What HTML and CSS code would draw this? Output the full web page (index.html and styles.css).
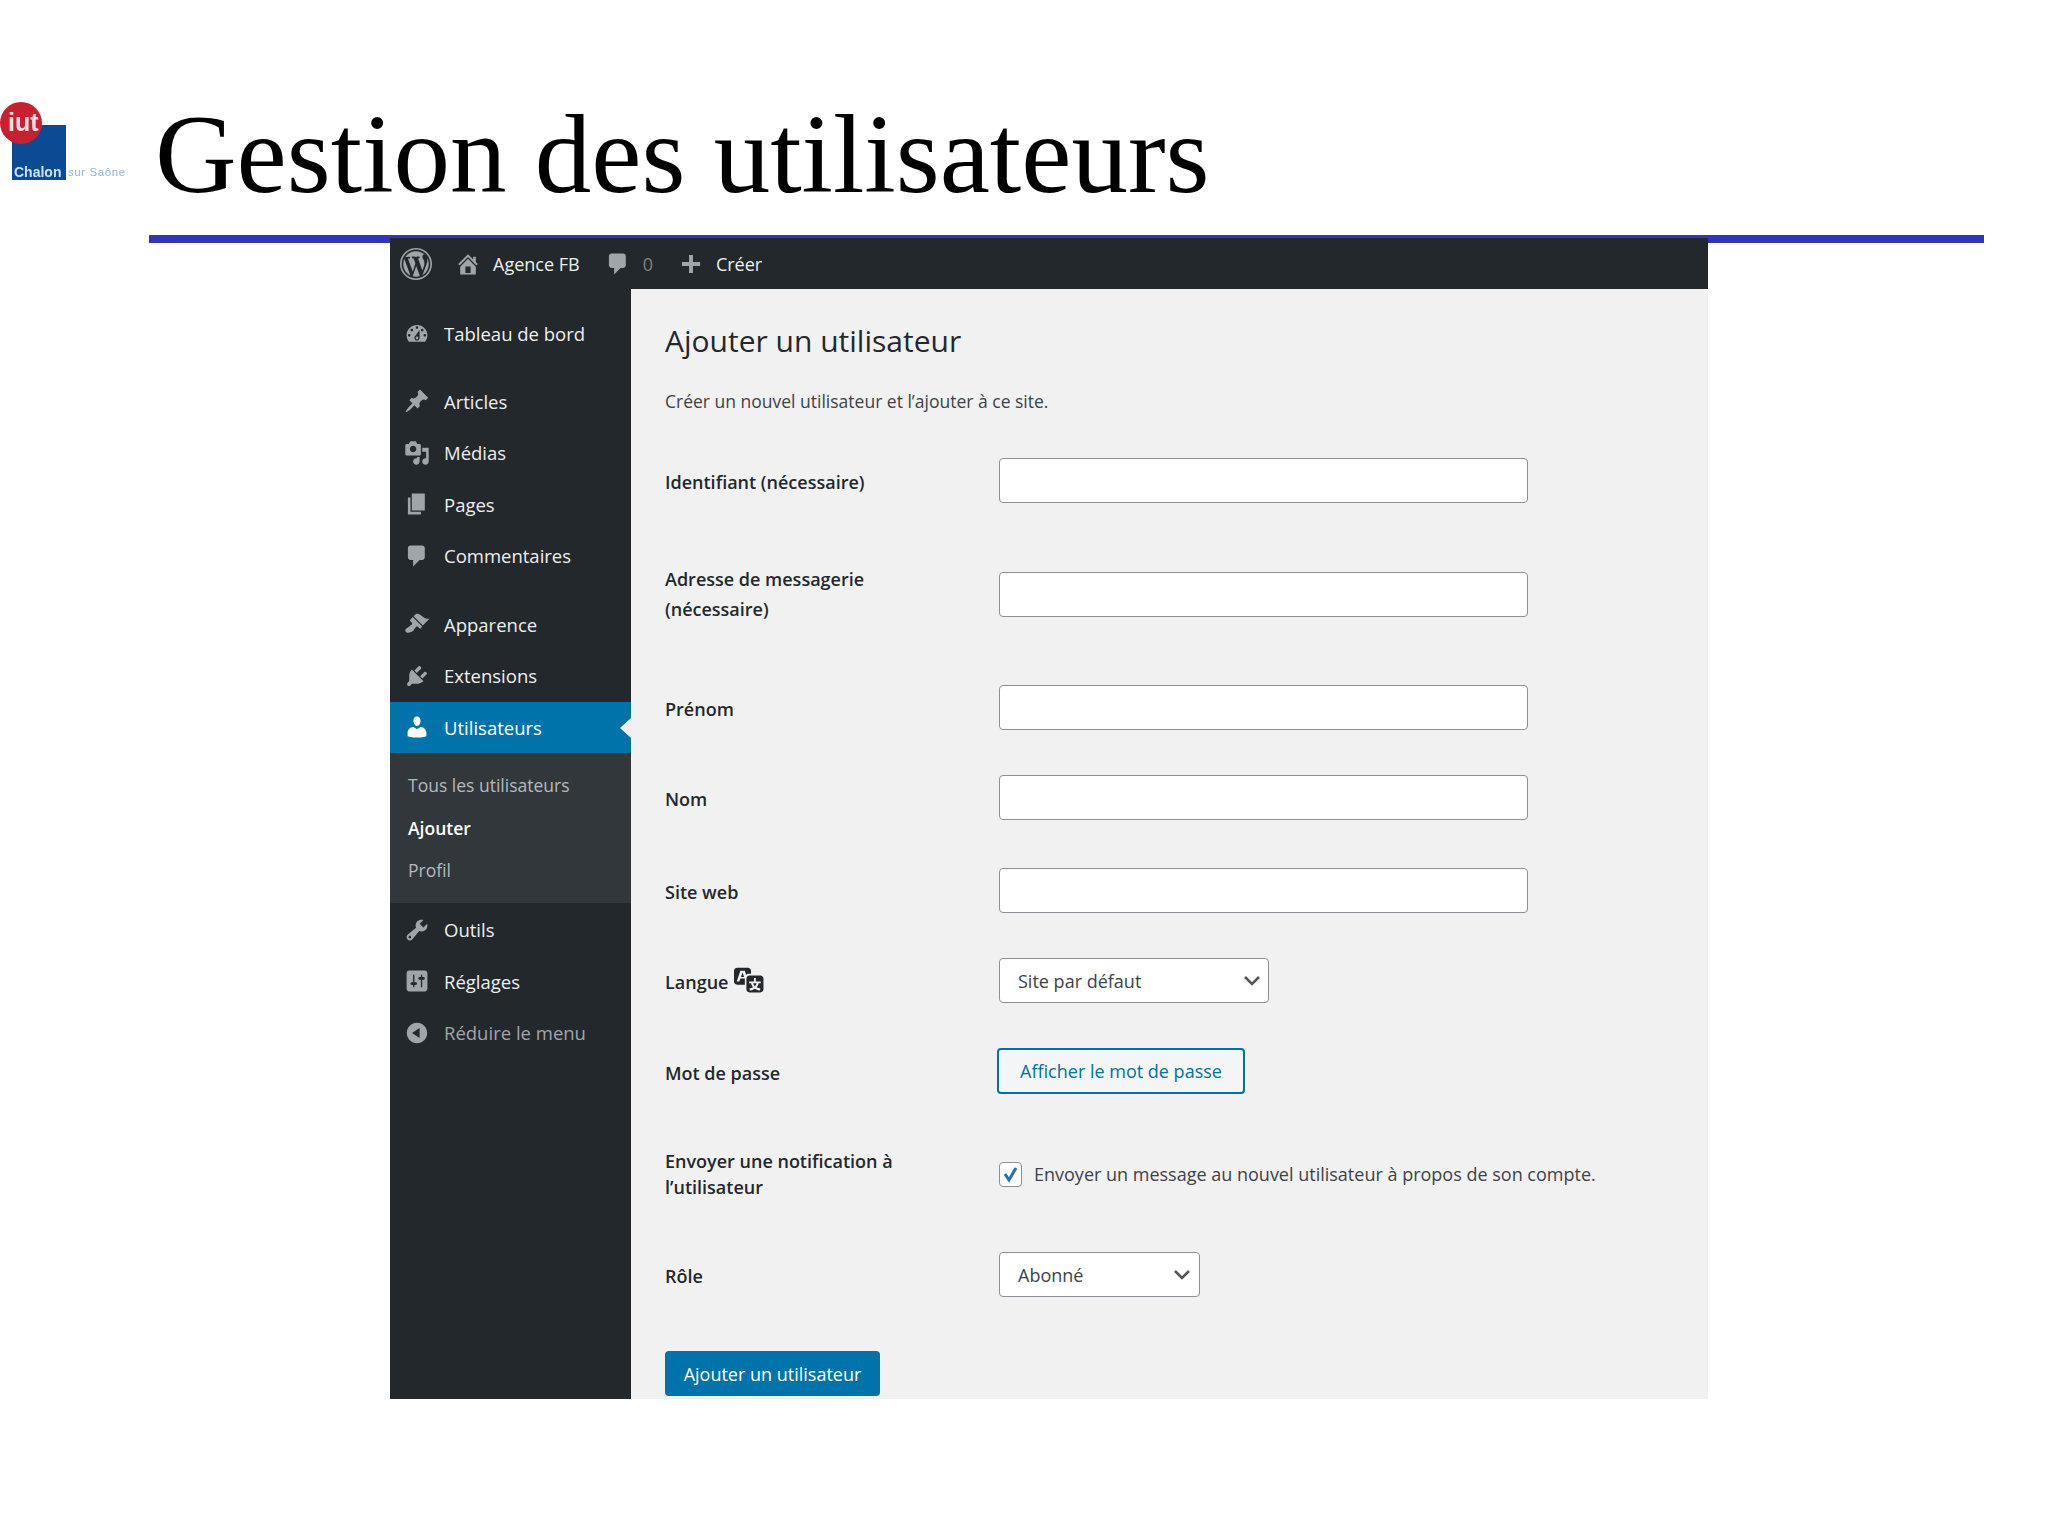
FILE: index.html
```html
<!DOCTYPE html>
<html lang="fr">
<head>
    <meta charset="UTF-8">
    <title>Gestion des utilisateurs</title>
    <link rel="stylesheet" href="styles.css">
</head>
<body>
    <svg class="defs" width="0" height="0">
        <symbol id="i-wp" viewBox="0 0 20 20"><path d="M20 10c0-5.52-4.48-10-10-10S0 4.48 0 10s4.48 10 10 10 10-4.48 10-10zM10 1.01c4.97 0 8.99 4.02 8.99 8.99s-4.02 8.99-8.99 8.99S1.01 14.97 1.01 10 5.03 1.01 10 1.01zM8.01 14.82L4.96 6.61c.49-.03 1.05-.08 1.05-.08.43-.05.38-1.01-.06-.99 0 0-1.29.1-2.13.1-.15 0-.33 0-.52-.01 1.44-2.17 3.9-3.6 6.7-3.6 2.09 0 3.99.79 5.41 2.09-.6-.08-1.45.35-1.45 1.42 0 .66.38 1.22.79 1.88.31.54.5 1.22.5 2.21 0 1.34-1.27 4.48-1.27 4.48l-2.71-7.5c.48-.03.75-.16.75-.16.43-.05.38-1.1-.05-1.08 0 0-1.3.11-2.14.11-.78 0-2.11-.11-2.11-.11-.43-.02-.48 1.06-.05 1.08l.84.08 1.12 3.04zm6.02 2.15L16.64 10s.67-1.69.39-3.81c.63 1.14.94 2.42.94 3.81 0 2.96-1.56 5.58-3.94 6.97zM2.68 6.77L6.5 17.25c-2.67-1.3-4.47-4.08-4.47-7.25 0-1.16.2-2.23.65-3.23zm7.45 4.53l2.29 6.25c-.75.27-1.57.42-2.42.42-.72 0-1.41-.11-2.06-.3z"/></symbol>
        <symbol id="i-home" viewBox="0 0 20 20"><path d="M16 8.5l1.53 1.53-1.06 1.06L10 4.62l-6.47 6.47-1.06-1.06L10 2.5l4 4v-2h2v4zm-6-2.46l6 5.99V18H4v-5.97zM12 17v-5H8v5h4z"/></symbol>
        <symbol id="i-comment" viewBox="0 0 20 20"><path d="M5 2h9c1.1 0 2 .9 2 2v7c0 1.1-.9 2-2 2h-2l-5 5v-5H5c-1.1 0-2-.9-2-2V4c0-1.1.9-2 2-2z"/></symbol>
        <symbol id="i-plus" viewBox="0 0 20 20"><path d="M17 8.5v3h-5.5V17h-3v-5.500H3v-3h5.500V3h3v5.500H17z"/></symbol>
        <symbol id="i-dashboard" viewBox="0 0 20 20"><path d="M3.760 16h12.480c1.100-1.370 1.760-3.110 1.760-5 0-4.420-3.580-8-8-8s-8 3.580-8 8c0 1.890.660 3.630 1.760 5zM10 4c.550 0 1 .450 1 1s-.450 1-1 1-1-.450-1-1 .450-1 1-1zM6 6c.550 0 1 .450 1 1s-.450 1-1 1-1-.450-1-1 .450-1 1-1zm8 0c.550 0 1 .450 1 1s-.450 1-1 1-1-.450-1-1 .450-1 1-1zm-5.370 5.550L12 7v6c0 1.100-.900 2-2 2s-2-.900-2-2c0-.570.240-1.080.630-1.450zM4 10c.550 0 1 .450 1 1s-.450 1-1 1-1-.450-1-1 .450-1 1-1zm12 0c.550 0 1 .450 1 1s-.450 1-1 1-1-.450-1-1 .450-1 1-1zm-5 3c0-.550-.450-1-1-1s-1 .450-1 1 .450 1 1 1 1-.450 1-1z"/></symbol>
        <symbol id="i-pin" viewBox="0 0 20 20"><path d="M10.440 3.020l1.820-1.820 6.360 6.350-1.830 1.820c-1.050-.680-2.480-.570-3.410.360l-.750.750c-.920.930-1.040 2.350-.350 3.410l-1.830 1.820-2.410-2.410-2.800 2.790c-.420.420-3.380 2.710-3.800 2.290s1.860-3.390 2.280-3.810l2.790-2.790L4.100 9.360l1.830-1.820c1.050.690 2.480.570 3.400-.360l.750-.750c.930-.920 1.050-2.350.360-3.410z"/></symbol>
        <symbol id="i-media" viewBox="0 0 20 20"><path d="M13 11V4c0-.550-.450-1-1-1h-1.670L9 1H5L3.670 3H2c-.550 0-1 .450-1 1v7c0 .550.450 1 1 1h10c.550 0 1-.450 1-1zM7 4.500c1.380 0 2.500 1.120 2.500 2.500S8.380 9.500 7 9.500 4.500 8.380 4.500 7 5.620 4.500 7 4.500zM14 6h5v10.500c0 1.380-1.120 2.500-2.500 2.500S14 17.880 14 16.500s1.120-2.500 2.500-2.500c.170 0 .340.020.500.050V9h-3V6zm-4 8.050V13h2v3.500c0 1.380-1.120 2.500-2.500 2.500S7 17.880 7 16.500 8.120 14 9.500 14c.170 0 .340.020.500.050z"/></symbol>
        <symbol id="i-page" viewBox="0 0 20 20"><path d="M6 15V2h10v13H6zm-1 1h8v2H3V5h2v11z"/></symbol>
        <symbol id="i-brush" viewBox="0 0 20 20"><path d="M14.480 11.060L7.410 3.990l1.500-1.500c.500-.560 2.300-.470 3.510.320 1.210.800 1.430 1.280 2.910 2.100 1.180.640 2.450 1.260 4.450.850zm-.710.710L6.700 4.700 4.930 6.470c-.390.390-.390 1.020 0 1.410l1.060 1.060c.390.390.390 1.030 0 1.420-.600.600-1.430 1.110-2.210 1.690-.350.260-.700.530-1.010.840C1.430 13.230.400 14.960 1.500 16.060c.900.910 2.530.760 3.850.180.490-.220 1.020-.500 1.490-.900.310-.260.580-.590.840-.930.580-.780 1.090-1.610 1.690-2.210.390-.390 1.030-.390 1.420 0l1.060 1.060c.390.390 1.020.390 1.410 0z"/></symbol>
        <symbol id="i-plug" viewBox="0 0 20 20"><path d="M13.110 4.360L9.870 7.600 8 5.730l3.240-3.240c.350-.340 1.050-.200 1.560.320.520.510.660 1.210.310 1.550zm-8 1.770l.910-1.120 9.010 9.010-1.190.840c-.710.710-2.630 1.160-3.820 1.160H6.140L4.900 17.260c-.590.590-1.540.590-2.120 0-.590-.580-.590-1.530 0-2.120l1.240-1.240v-3.880c0-1.130.400-3.190 1.090-3.890zm7.260 3.970l3.240-3.240c.340-.350 1.040-.210 1.550.310.520.510.660 1.210.310 1.550l-3.240 3.250z"/></symbol>
        <symbol id="i-users" viewBox="0 0 20 20"><path d="M10 9.250c-2.270 0-2.730-3.440-2.730-3.440C7 4.020 7.820 2 9.970 2c2.160 0 2.980 2.020 2.710 3.810 0 0-.410 3.440-2.680 3.440zm0 2.570L12.720 10c2.390 0 4.520 2.330 4.520 4.530v2.490s-3.650 1.130-7.240 1.130c-3.650 0-7.240-1.130-7.240-1.130v-2.490c0-2.250 1.940-4.480 4.470-4.480z"/></symbol>
        <symbol id="i-tools" viewBox="0 0 20 20"><path d="M16.680 9.770c-1.340 1.340-3.300 1.670-4.950.990l-5.410 6.520c-.990.990-2.590.990-3.580 0s-.990-2.590 0-3.570l6.520-5.420c-.680-1.650-.350-3.610.990-4.950 1.280-1.280 3.120-1.620 4.720-1.060l-2.890 2.890 2.820 2.820 2.860-2.870c.530 1.580.180 3.390-1.080 4.650zM3.810 16.210c.400.390 1.040.390 1.430 0 .400-.400.400-1.040 0-1.430-.390-.400-1.030-.400-1.430 0-.390.390-.390 1.030 0 1.430z"/></symbol>
        <symbol id="i-settings" viewBox="0 0 20 20"><path d="M18 16V4c0-1.100-.900-2-2-2H4c-1.100 0-2 .900-2 2v12c0 1.100.900 2 2 2h12c1.100 0 2-.900 2-2zM8 11h1c.550 0 1 .450 1 1s-.450 1-1 1H8v1.500c0 .280-.220.500-.500.500s-.500-.220-.500-.500V13H6c-.550 0-1-.450-1-1s.450-1 1-1h1V5.500c0-.280.220-.500.500-.500s.500.220.500.500V11zm5-2h-1c-.550 0-1-.450-1-1s.450-1 1-1h1V5.500c0-.280.220-.500.500-.500s.500.220.500.500V7h1c.550 0 1 .450 1 1s-.450 1-1 1h-1v5.500c0 .280-.220.500-.500.500s-.500-.220-.500-.500V9z"/></symbol>
        <symbol id="i-collapse" viewBox="0 0 20 20"><path d="M10 2.160c4.330 0 7.840 3.510 7.840 7.840s-3.510 7.840-7.840 7.840S2.160 14.330 2.160 10 5.710 2.160 10 2.160zm2 11.720V6.120L6.180 9.970z"/></symbol>
        <symbol id="i-translate" viewBox="0 0 20 20"><path d="M11 7H9.490c-.630 0-1.250.300-1.590.700L7 5H4.130l-2.390 7h1.690l.740-2H7v4H2c-1.100 0-2-.900-2-2V5c0-1.100.900-2 2-2h7c1.100 0 2 .900 2 2v2zM6.510 9H4.490l1-2.930zM10 8h7c1.100 0 2 .900 2 2v7c0 1.100-.900 2-2 2h-7c-1.100 0-2-.900-2-2v-7c0-1.100.900-2 2-2zm7.250 5v-1.080h-3.170V9.750h-1.160v2.170H9.750V13h1.280c.110.850.560 1.850 1.280 2.620-.870.360-1.890.620-2.310.620-.010.020.220.970.200 1.460.840 0 2.210-.500 3.280-1.150 1.090.650 2.480 1.150 3.340 1.150-.020-.490.200-1.440.200-1.460-.430 0-1.490-.270-2.380-.630.700-.770 1.140-1.770 1.250-2.610h1.360zm-3.810 1.930c-.500-.460-.850-1.130-1.010-1.930h2.090c-.170.800-.510 1.470-1 1.930l-.040.030s-.030-.020-.040-.030z"/></symbol>
    </svg>

    <header class="slide-head">
        <svg class="logo" viewBox="0 0 137 105" width="137" height="105">
            <rect x="12" y="45" width="54" height="55" fill="#0d4a94"/>
            <text x="14" y="97" class="logo-city">Chalon</text>
            <text x="68" y="96" class="logo-sub">sur Saône</text>
            <circle cx="21" cy="43" r="21" fill="#c9202f"/>
            <text x="8" y="51" class="logo-iut">iut</text>
        </svg>
        <h1 class="slide-title">Gestion des utilisateurs</h1>
    </header>
    <div class="slide-rule"></div>

    <div class="wp">
        <div class="adminbar">
            <svg class="bar-logo"><use href="#i-wp"/></svg>
            <span class="bar-item bar-site"><svg class="bar-icon"><use href="#i-home"/></svg>Agence FB</span>
            <span class="bar-item bar-comments"><svg class="bar-icon"><use href="#i-comment"/></svg><span class="bar-count">0</span></span>
            <span class="bar-item bar-new"><svg class="bar-icon"><use href="#i-plus"/></svg>Créer</span>
        </div>
        <div class="wp-body">
            <nav class="sidebar">
                <ul class="menu menu-first">
                    <li><svg class="menu-icon"><use href="#i-dashboard"/></svg>Tableau de bord</li>
                </ul>
                <ul class="menu">
                    <li><svg class="menu-icon"><use href="#i-pin"/></svg>Articles</li>
                    <li><svg class="menu-icon"><use href="#i-media"/></svg>Médias</li>
                    <li><svg class="menu-icon"><use href="#i-page"/></svg>Pages</li>
                    <li><svg class="menu-icon"><use href="#i-comment"/></svg>Commentaires</li>
                </ul>
                <ul class="menu">
                    <li><svg class="menu-icon"><use href="#i-brush"/></svg>Apparence</li>
                    <li><svg class="menu-icon"><use href="#i-plug"/></svg>Extensions</li>
                    <li class="active"><svg class="menu-icon"><use href="#i-users"/></svg>Utilisateurs</li>
                </ul>
                <ul class="submenu">
                    <li>Tous les utilisateurs</li>
                    <li class="current">Ajouter</li>
                    <li>Profil</li>
                </ul>
                <ul class="menu menu-last">
                    <li><svg class="menu-icon"><use href="#i-tools"/></svg>Outils</li>
                    <li><svg class="menu-icon"><use href="#i-settings"/></svg>Réglages</li>
                    <li class="collapse"><svg class="menu-icon"><use href="#i-collapse"/></svg>Réduire le menu</li>
                </ul>
            </nav>
            <main class="content">
                <h2 class="page-title">Ajouter un utilisateur</h2>
                <p class="intro">Créer un nouvel utilisateur et l’ajouter à ce site.</p>
                <form class="user-form">
                    <div class="form-row row-wide">
                        <label for="login">Identifiant (nécessaire)</label>
                        <input type="text" id="login">
                    </div>
                    <div class="form-row row-wide">
                        <label for="email" class="label-loose">Adresse de messagerie (nécessaire)</label>
                        <input type="text" id="email">
                    </div>
                    <div class="form-row">
                        <label for="first">Prénom</label>
                        <input type="text" id="first">
                    </div>
                    <div class="form-row row-mid">
                        <label for="last">Nom</label>
                        <input type="text" id="last">
                    </div>
                    <div class="form-row">
                        <label for="url">Site web</label>
                        <input type="text" id="url">
                    </div>
                    <div class="form-row">
                        <label for="locale">Langue <svg class="lang-icon"><use href="#i-translate"/></svg></label>
                        <select id="locale" class="select-lang"><option>Site par défaut</option></select>
                    </div>
                    <div class="form-row row-pass">
                        <label>Mot de passe</label>
                        <button type="button" class="btn-outline">Afficher le mot de passe</button>
                    </div>
                    <div class="form-row row-notify">
                        <label for="notify" class="label-tight">Envoyer une notification à l’utilisateur</label>
                        <div class="check-line">
                            <input type="checkbox" id="notify" checked>
                            <span>Envoyer un message au nouvel utilisateur à propos de son compte.</span>
                        </div>
                    </div>
                    <div class="form-row row-role">
                        <label for="role">Rôle</label>
                        <select id="role" class="select-role"><option>Abonné</option></select>
                    </div>
                    <button type="button" class="btn-primary">Ajouter un utilisateur</button>
                </form>
            </main>
        </div>
    </div>
</body>
</html>
```
FILE: styles.css
```css
* {
    box-sizing: border-box;
}
body {
    margin: 0;
    background: #fff;
    font-family: "Open Sans", "Noto Sans", sans-serif;
}
ul {
    list-style: none;
    margin: 0;
    padding: 0;
}
.defs {
    display: block;
    height: 0;
}

/* slide header */
.slide-head {
    display: flex;
    height: 235px;
}
.logo {
    flex: none;
    margin-top: 80px;
    filter: blur(0.7px);
}
.logo-city {
    font: bold 14px "Liberation Sans", sans-serif;
    fill: #cfe0f2;
}
.logo-sub {
    font: 11.500px "Liberation Sans", sans-serif;
    letter-spacing: 0.600px;
    fill: #8eb4dc;
}
.logo-iut {
    font: bold 25px "Liberation Sans", sans-serif;
    fill: #f6dfe0;
}
.slide-title {
    margin: 97px 0 0 18px;
    font: 400 113px/1 "Liberation Serif", serif;
    color: #000;
}
.slide-rule {
    width: 1835px;
    height: 8px;
    margin-left: 149px;
    background: #3333bb;
}

/* wp window */
.wp {
    width: 1318px;
    height: 1161px;
    margin: -5px 0 0 390px;
    display: flex;
    flex-direction: column;
    background: #23282d;
    position: relative;
}
.adminbar {
    height: 51px;
    display: flex;
    align-items: center;
    color: #eee;
    font-size: 18px;
}
.adminbar svg {
    fill: #a0a5aa;
}
.bar-logo {
    width: 32px;
    height: 32px;
    margin-left: 10px;
}
.bar-item {
    display: flex;
    align-items: center;
}
.bar-icon {
    width: 26px;
    height: 26px;
    margin-right: 12px;
}
.bar-site {
    margin-left: 23px;
}
.bar-comments {
    margin-left: 25px;
}
.bar-count {
    color: #7d8287;
}
.bar-new {
    margin-left: 25px;
}
.wp-body {
    flex: 1;
    display: flex;
    min-height: 0;
}

/* sidebar */
.sidebar {
    width: 241px;
    flex: none;
    padding-top: 19px;
    color: #eee;
    font-size: 18.500px;
}
.menu {
    margin-bottom: 17px;
}
.menu li {
    position: relative;
    height: 51.500px;
    padding-left: 14px;
    display: flex;
    align-items: center;
}
.menu-icon {
    flex: none;
    width: 26px;
    height: 26px;
    margin-right: 14px;
    fill: #a0a5aa;
}
.menu-first {
    margin-bottom: 16px;
}
.menu:nth-child(3) {
    margin-bottom: 0;
}
.menu li.active {
    background: #0073aa;
    color: #fff;
}
.active .menu-icon {
    fill: #fff;
}
.active::after {
    content: "";
    position: absolute;
    right: 0;
    top: 16px;
    border: 10px solid transparent;
    border-left: 0;
    border-right: 11px solid #f1f1f1;
}
.submenu {
    height: 150px;
    padding: 11px 0 0 18px;
    background: #32373c;
    color: #b4b9be;
    font-size: 17.500px;
}
.submenu li {
    height: 42.500px;
    line-height: 42px;
}
.submenu .current {
    color: #fff;
    font-weight: 600;
}
.menu-last {
    margin-bottom: 0;
    padding-top: 1px;
}
.menu .collapse {
    color: #a0a5aa;
}

/* content */
.content {
    flex: 1;
    padding: 0 0 0 34px;
    background: #f1f1f1;
    color: #23282d;
    overflow: hidden;
}
.page-title {
    margin: 31px 0 0;
    font-size: 30px;
    font-weight: 400;
    line-height: 42px;
}
.intro {
    margin: 27px 0 0;
    font-size: 17.500px;
    line-height: 24px;
    color: #3c434a;
}
.user-form {
    margin-top: 45px;
}
.form-row {
    display: grid;
    grid-template-columns: 334px 1fr;
    align-items: center;
    padding-bottom: 45px;
    font-size: 18px;
}
.row-wide {
    padding-bottom: 61px;
}
.row-mid {
    padding-bottom: 48px;
}
.row-pass {
    padding-bottom: 54px;
}
.row-notify {
    padding-bottom: 52px;
}
.row-role {
    padding-bottom: 54px;
}
.form-row label {
    display: block;
    font-weight: 600;
    line-height: 30px;
    padding-top: 3px;
    padding-right: 60px;
}
.form-row .label-tight {
    line-height: 26px;
    padding-top: 0;
}
.form-row .label-loose {
    padding-top: 0;
}
.lang-icon {
    width: 31px;
    height: 31px;
    vertical-align: -5px;
    margin-left: 1px;
    margin-top: -8px;
    fill: #23282d;
}
input[type="text"], select {
    display: block;
    height: 45px;
    border: 1px solid #8c8f94;
    border-radius: 4px;
    background: #fff;
}
input[type="text"] {
    width: 529px;
}
select {
    appearance: none;
    padding: 0 0 0 18px;
    font: 18px "Open Sans", sans-serif;
    color: #3c434a;
    background: #fff url("data:image/svg+xml,%3Csvg xmlns='http://www.w3.org/2000/svg' width='20' height='20'%3E%3Cpath d='M3 6l7 7 7-7' fill='none' stroke='%23555' stroke-width='2.500'/%3E%3C/svg%3E") no-repeat;
}
.select-lang {
    width: 270px;
    background-position: 242px 12px;
}
.select-role {
    width: 201px;
    background-position: 172px 12px;
}
.btn-outline {
    justify-self: start;
    height: 46px;
    width: 248px;
    margin-left: -2px;
    padding: 0;
    border: 2px solid #0071a1;
    border-radius: 4px;
    background: #f3f5f6;
    color: #0071a1;
    font: 18px "Open Sans", sans-serif;
}
.check-line {
    display: flex;
    align-items: center;
    font-size: 18px;
    color: #3c434a;
}
.check-line input {
    appearance: none;
    flex: none;
    width: 23px;
    height: 25px;
    margin: 0 12px 0 0;
    border: 1px solid #8c8f94;
    border-radius: 4px;
    background: #fff url("data:image/svg+xml,%3Csvg xmlns='http://www.w3.org/2000/svg' width='21' height='23'%3E%3Cpath d='M5 11l4 6 7-12' fill='none' stroke='%232271b1' stroke-width='3'/%3E%3C/svg%3E") no-repeat center;
}
.btn-primary {
    display: block;
    width: 215px;
    height: 45px;
    padding: 0;
    border: 0;
    border-radius: 4px;
    background: #0073aa;
    color: #fff;
    font: 18px "Open Sans", sans-serif;
}
```
